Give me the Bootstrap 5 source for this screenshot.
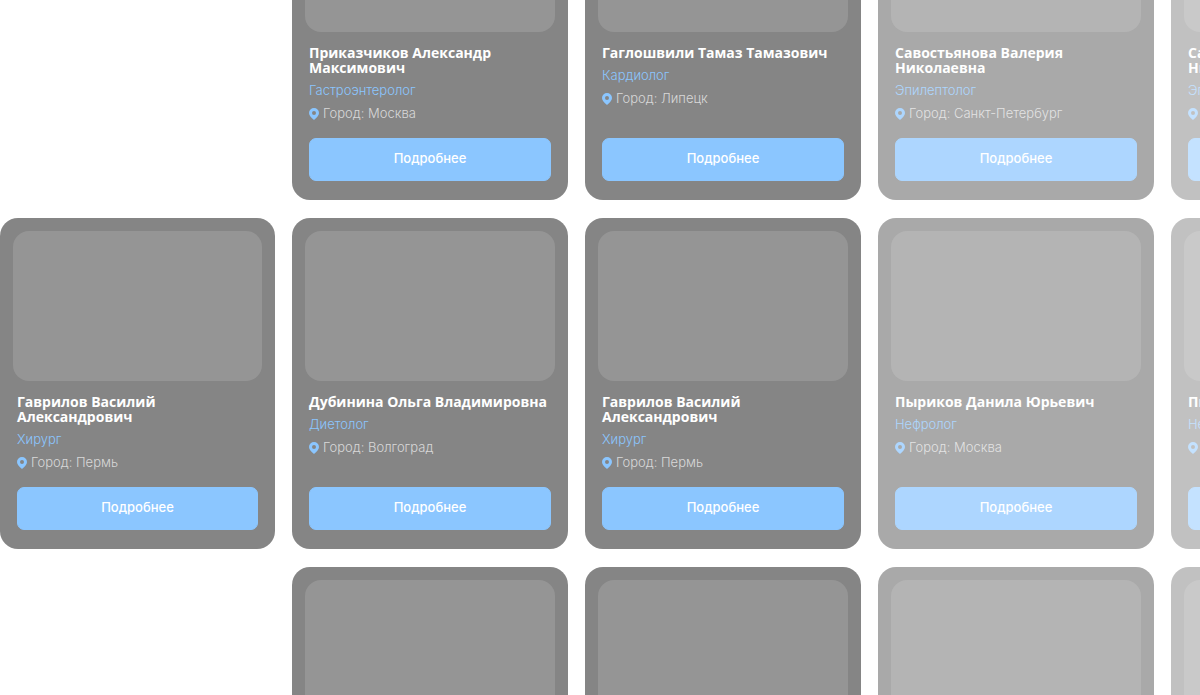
<!DOCTYPE html>
<html lang="ru">
<head>
<meta charset="utf-8">
<meta name="viewport" content="width=device-width, initial-scale=1">
<title>Наши врачи</title>
<link href="https://cdn.jsdelivr.net/npm/bootstrap@5.3.0/dist/css/bootstrap.min.css" rel="stylesheet">
<style>
  body { font-family: Inter, "Open Sans", sans-serif; background: #fff; }
  /* the list is scrolled part-way down its first row */
  .doctors-grid {
    display: grid;
    grid-template-columns: calc(23% - 1px) repeat(4, 23%);
    grid-auto-rows: 331px;
    gap: 18px 17px;
    margin-top: -131px;
  }
  .doctor-card {
    background: #858585;
    border-radius: 18px;
    padding: 13px 13px 19px;
  }
  .doctor-photo { height: 150px; border-radius: 16px; background: #959595; }
  .doctor-name { font-family: "Open Sans", Inter, sans-serif; font-size: 14px; line-height: 15px; font-weight: 700; color: #fff; }
  .doctor-spec { font-size: 13px; line-height: 15px; font-weight: 300; color: #8bc6ff; }
  .doctor-city { font-size: 13px; line-height: 15px; font-weight: 300; color: #d8d8d8; }
  .doctor-info { gap: 8px; padding: 13px 0 0 4px; }
  .doctor-more {
    --bs-btn-color: #fff; --bs-btn-bg: #8bc6ff; --bs-btn-border-color: #8bc6ff;
    --bs-btn-hover-color: #fff; --bs-btn-hover-bg: #74b8f8; --bs-btn-hover-border-color: #74b8f8;
    height: 43px; border-radius: 7px; font-size: 13px; font-weight: 500;
    margin: 0 4px; padding: 5px 12px 7px;
  }
  .fade-near { opacity: .7; }
  .fade-far { opacity: .5; }
</style>
</head>
<body>
<main class="vh-100 overflow-hidden">
  <div class="doctors-grid" id="doctors"></div>
</main>

<template id="doctor">
  <article class="doctor-card d-flex flex-column">
    <div class="doctor-photo flex-shrink-0"></div>
    <div class="doctor-info d-flex flex-column">
      <h2 class="doctor-name m-0"></h2>
      <a href="#" class="doctor-spec text-decoration-none"></a>
      <div class="doctor-city d-flex align-items-center gap-1">
        <svg width="10" height="12" viewBox="0 0 10 12" aria-hidden="true"><path fill="#8bc6ff" fill-rule="evenodd" d="M5 0a5 5 0 0 0-5 5c0 2.600 2.200 4.700 5 7 2.800-2.300 5-4.400 5-7a5 5 0 0 0-5-5zm0 3a2 2 0 1 1 0 4 2 2 0 0 1 0-4z"/></svg>
        <span></span>
      </div>
    </div>
    <button type="button" class="btn doctor-more mt-auto">Подробнее</button>
  </article>
</template>

<script src="https://cdn.jsdelivr.net/npm/bootstrap@5.3.0/dist/js/bootstrap.bundle.min.js"></script>
<script>
  const gavrilov = ["Гаврилов Василий Александрович", "Хирург", "Пермь"];
  const dubinina = ["Дубинина Ольга Владимировна", "Диетолог", "Волгоград"];
  const pyrikov = ["Пыриков Данила Юрьевич", "Нефролог", "Москва"];
  const prikazchikov = ["Приказчиков Александр Максимович", "Гастроэнтеролог", "Москва"];
  const gagloshvili = ["Гаглошвили Тамаз Тамазович", "Кардиолог", "Липецк"];
  const savostyanova = ["Савостьянова Валерия Николаевна", "Эпилептолог", "Санкт-Петербург"];
  const rows = [
    [null, prikazchikov, gagloshvili, savostyanova, savostyanova],
    [gavrilov, dubinina, gavrilov, pyrikov, pyrikov],
    [null, prikazchikov, gagloshvili, savostyanova, savostyanova]
  ];
  const grid = document.getElementById("doctors");
  const template = document.getElementById("doctor");
  rows.forEach(row => row.forEach((doctor, column) => {
    if (!doctor) { grid.append(document.createElement("div")); return; }
    const card = template.content.firstElementChild.cloneNode(true);
    card.querySelector(".doctor-name").textContent = doctor[0];
    card.querySelector(".doctor-spec").textContent = doctor[1];
    card.querySelector(".doctor-city span").textContent = "Город: " + doctor[2];
    if (column === 3) card.classList.add("fade-near");
    if (column === 4) card.classList.add("fade-far");
    grid.append(card);
  }));
</script>
</body>
</html>
